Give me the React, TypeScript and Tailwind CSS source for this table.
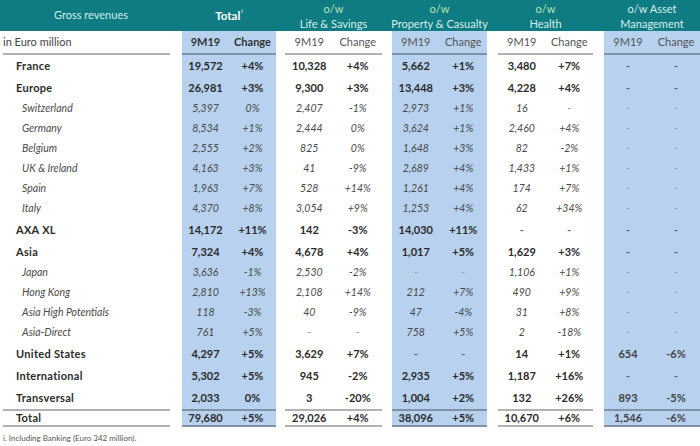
import React from "react";

type RowKind = "bold" | "italic";

type Row = {
  label: string;
  kind: RowKind;
  values: string[];
};

const rows: Row[] = [
  { label: "France", kind: "bold", values: ["19,572", "+4%", "10,328", "+4%", "5,662", "+1%", "3,480", "+7%", "-", "-"] },
  { label: "Europe", kind: "bold", values: ["26,981", "+3%", "9,300", "+3%", "13,448", "+3%", "4,228", "+4%", "-", "-"] },
  { label: "Switzerland", kind: "italic", values: ["5,397", "0%", "2,407", "-1%", "2,973", "+1%", "16", "-", "-", "-"] },
  { label: "Germany", kind: "italic", values: ["8,534", "+1%", "2,444", "0%", "3,624", "+1%", "2,460", "+4%", "-", "-"] },
  { label: "Belgium", kind: "italic", values: ["2,555", "+2%", "825", "0%", "1,648", "+3%", "82", "-2%", "-", "-"] },
  { label: "UK & Ireland", kind: "italic", values: ["4,163", "+3%", "41", "-9%", "2,689", "+4%", "1,433", "+1%", "-", "-"] },
  { label: "Spain", kind: "italic", values: ["1,963", "+7%", "528", "+14%", "1,261", "+4%", "174", "+7%", "-", "-"] },
  { label: "Italy", kind: "italic", values: ["4,370", "+8%", "3,054", "+9%", "1,253", "+4%", "62", "+34%", "-", "-"] },
  { label: "AXA XL", kind: "bold", values: ["14,172", "+11%", "142", "-3%", "14,030", "+11%", "-", "-", "-", "-"] },
  { label: "Asia", kind: "bold", values: ["7,324", "+4%", "4,678", "+4%", "1,017", "+5%", "1,629", "+3%", "-", "-"] },
  { label: "Japan", kind: "italic", values: ["3,636", "-1%", "2,530", "-2%", "-", "-", "1,106", "+1%", "-", "-"] },
  { label: "Hong Kong", kind: "italic", values: ["2,810", "+13%", "2,108", "+14%", "212", "+7%", "490", "+9%", "-", "-"] },
  { label: "Asia High Potentials", kind: "italic", values: ["118", "-3%", "40", "-9%", "47", "-4%", "31", "+8%", "-", "-"] },
  { label: "Asia-Direct", kind: "italic", values: ["761", "+5%", "-", "-", "758", "+5%", "2", "-18%", "-", "-"] },
  { label: "United States", kind: "bold", values: ["4,297", "+5%", "3,629", "+7%", "-", "-", "14", "+1%", "654", "-6%"] },
  { label: "International", kind: "bold", values: ["5,302", "+5%", "945", "-2%", "2,935", "+5%", "1,187", "+16%", "-", "-"] },
  { label: "Transversal", kind: "bold", values: ["2,033", "0%", "3", "-20%", "1,004", "+2%", "132", "+26%", "893", "-5%"] },
];

const totals = ["79,680", "+5%", "29,026", "+4%", "38,096", "+5%", "10,670", "+6%", "1,546", "-6%"];

// one entry per column group: offset + width, and whether it is shaded
const groups = [
  { cls: "w-[94px]", blue: true },
  { cls: "ml-[9px] w-[97px]", blue: false },
  { cls: "ml-[10px] w-[95px]", blue: true },
  { cls: "ml-[11px] w-[95px]", blue: false },
  { cls: "ml-[11px] w-[96px]", blue: true },
];

function GroupCells({
  values,
  index,
  className,
  cellClass,
}: {
  values: string[];
  index: number;
  className?: string;
  cellClass: (v: string) => string;
}) {
  const g = groups[index];
  return (
    <div className={`flex ${g.cls} ${g.blue ? "bg-[#b7d1ee]" : ""} ${className ?? ""}`}>
      {values.map((v, i) => (
        <div key={i} className={`w-1/2 text-center ${cellClass(v)}`}>
          {v}
        </div>
      ))}
    </div>
  );
}

function HeaderCell({ index, top, bottom }: { index: number; top: string; bottom: string }) {
  const g = groups[index];
  return (
    <div className={`${g.cls} flex flex-col items-center justify-center whitespace-nowrap leading-[15px]`}>
      <span className="text-[#b9e6b0]">{top}</span>
      <span className="text-[#d6efe8]">{bottom}</span>
    </div>
  );
}

export default function App() {
  return (
    <div className="w-[700px] h-[446px] overflow-hidden bg-white font-['Lato',sans-serif] text-[11px]">
      <div className="flex h-[31px] bg-[#0f7b82]">
        <div className="w-[182px] flex items-center justify-center text-[#cdeeee]">Gross revenues</div>
        <div className={`${groups[0].cls} flex items-center justify-center font-bold text-white text-[11.5px]`}>
          Total<sup className="text-[6px] font-normal ml-[1px] -mt-[4px]">i</sup>
        </div>
        <HeaderCell index={1} top="o/w" bottom="Life & Savings" />
        <HeaderCell index={2} top="o/w" bottom="Property & Casualty" />
        <HeaderCell index={3} top="o/w" bottom="Health" />
        <div className={`${groups[4].cls} flex flex-col items-center justify-center whitespace-nowrap leading-[15px] text-[#d6efe8]`}>
          <span>o/w Asset</span>
          <span>Management</span>
        </div>
      </div>

      {/* units row */}
      <div className="flex h-[24px]">
        <div className="w-[182px] pl-[3px] pr-[12px]">
          <div className="h-full flex items-center border-b-2 border-black/30 text-[#444]">in Euro million</div>
        </div>
        {groups.map((_, gi) => (
          <GroupCells
            key={gi}
            index={gi}
            values={["9M19", "Change"]}
            className="border-b-2 border-black/30 items-center"
            cellClass={() => (gi === 0 ? "font-bold text-[#333]" : "text-[#555]")}
          />
        ))}
      </div>

      {rows.map((row) => {
        const bold = row.kind === "bold";
        return (
          <div key={row.label} className={`flex ${bold ? "h-[22px]" : "h-[20px]"}`}>
            <div
              className={`w-[182px] flex items-center ${
                bold ? "pl-[16px] font-bold text-[#2b2b2b] tracking-[0.3px]" : "pl-[22px] italic text-[#4a4a4a] text-[10.5px]"
              }`}
            >
              {row.label}
            </div>
            {groups.map((_, gi) => (
              <GroupCells
                key={gi}
                index={gi}
                values={row.values.slice(gi * 2, gi * 2 + 2)}
                className="items-center"
                cellClass={(v) =>
                  bold
                    ? v === "-"
                      ? "font-bold text-[#666]"
                      : gi === 4
                        ? "font-bold text-[#444]"
                        : "font-bold text-[#2b2b2b]"
                    : v === "-"
                      ? "italic text-[#999] text-[10.5px]"
                      : "italic text-[#4a4a4a] text-[10.5px]"
                }
              />
            ))}
          </div>
        );
      })}

      {/* total row */}
      <div className="flex h-[18px]">
        <div className="w-[182px] pl-[3px] pr-[12px]">
          <div className="h-full flex items-center border-y-2 border-black/30 pl-[13px] font-bold text-[#2b2b2b] tracking-[0.3px]">
            Total
          </div>
        </div>
        {groups.map((_, gi) => (
          <GroupCells
            key={gi}
            index={gi}
            values={totals.slice(gi * 2, gi * 2 + 2)}
            className="border-y-2 border-black/30 items-center"
            cellClass={() => (gi === 4 ? "font-bold text-[#444]" : "font-bold text-[#2b2b2b]")}
          />
        ))}
      </div>

      <div className="mt-[6px] pl-[3px] text-[8px] leading-[10px] text-[#555]">
        i. Including Banking (Euro 342 million).
      </div>
    </div>
  );
}
